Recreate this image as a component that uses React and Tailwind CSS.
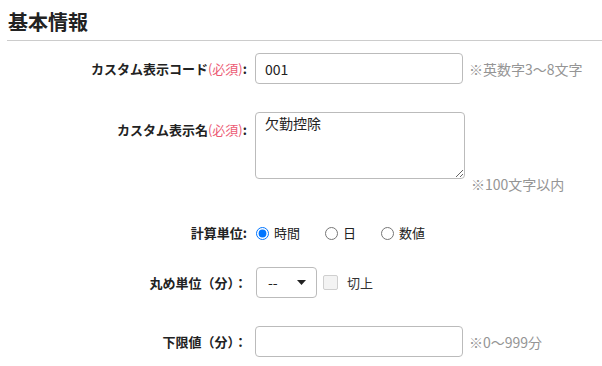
import React from 'react';

const font = { fontFamily: '"Noto Sans CJK JP", "Noto Sans", sans-serif' };

function Label({ children, className = '' }) {
  return (
    <div className={`w-[247px] shrink-0 text-right text-[13px] font-bold text-[#222] leading-[18px] ${className}`}>
      {children}
    </div>
  );
}

function Req() {
  return <span className="font-normal text-[#ec5a73]">(必須)</span>;
}

function Hint({ children, className = '' }) {
  return <span className={`text-[14px] text-[#959595] leading-[18px] ${className}`}>{children}</span>;
}

function Radio({ label, checked }) {
  return (
    <label className="flex items-center gap-[5px] text-[13px] text-[#222]">
      <input type="radio" name="unit" defaultChecked={checked} className="m-0 w-[13px] h-[13px] accent-[#0075ff]" />
      <span>{label}</span>
    </label>
  );
}

export default function App() {
  return (
    <div className="w-[602px] h-[366px] bg-white overflow-hidden" style={font}>
      <div className="ml-[7px] pl-[1px] pt-[10px] pb-[6px] border-b border-[#cccccc]">
        <h1 className="text-[20px] font-bold leading-[24px] text-[#222]">基本情報</h1>
      </div>

      {/* コード */}
      <div className="mt-[12px] flex items-center h-[31px]">
        <Label>
          カスタム表示コード<Req />:
        </Label>
        <div className="ml-[8px] flex items-center gap-[6px]">
          <input
            defaultValue="001"
            className="w-[208px] h-[31px] border border-[#bbbbbb] rounded-[4px] px-[9px] text-[14px] text-[#222] outline-none"
          />
          <Hint>※英数字3〜8文字</Hint>
        </div>
      </div>

      {/* 名前 */}
      <div className="mt-[28px] flex items-start h-[81px]">
        <Label className="pt-[9px]">
          カスタム表示名<Req />:
        </Label>
        <div className="ml-[8px] flex items-start gap-[6px]">
          <textarea
            defaultValue="欠勤控除"
            className="w-[210px] h-[67px] border border-[#bbbbbb] rounded-[4px] px-[9px] pt-[1px] text-[14px] leading-[18px] text-[#222] outline-none resize-y"
          />
          <Hint className="mt-[63px]">※100文字以内</Hint>
        </div>
      </div>

      {/* 計算単位 */}
      <div className="mt-[30px] flex items-center h-[20px]">
        <Label>計算単位:</Label>
        <div className="ml-[9px] flex items-center gap-[25px]">
          <Radio label="時間" checked />
          <Radio label="日" />
          <Radio label="数値" />
        </div>
      </div>

      {/* 丸め単位 */}
      <div className="mt-[24px] flex items-center h-[31px]">
        <Label>丸め単位（分）：</Label>
        <div className="ml-[9px] flex items-center">
          <div className="w-[61px] h-[31px] border border-[#bbbbbb] rounded-[4px] flex items-center justify-between pl-[11px] pr-[10px] text-[14px] text-[#222]">
            <span>--</span>
            <svg width="9" height="5" viewBox="0 0 9 5">
              <path d="M0 0 L9 0 L4.5 5 Z" fill="#222" />
            </svg>
          </div>
          <span className="ml-[6px] w-[15px] h-[15px] border border-[#cfcfcf] bg-[#f3f3f3] rounded-[2px]" />
          <span className="ml-[9px] text-[13px] text-[#333]">切上</span>
        </div>
      </div>

      {/* 下限値 */}
      <div className="mt-[28px] flex items-center h-[31px]">
        <Label>下限値（分）：</Label>
        <div className="ml-[8px] flex items-center gap-[6px]">
          <input className="w-[208px] h-[31px] border border-[#bbbbbb] rounded-[4px] px-[9px] text-[14px] outline-none" />
          <Hint>※0〜999分</Hint>
        </div>
      </div>
    </div>
  );
}
